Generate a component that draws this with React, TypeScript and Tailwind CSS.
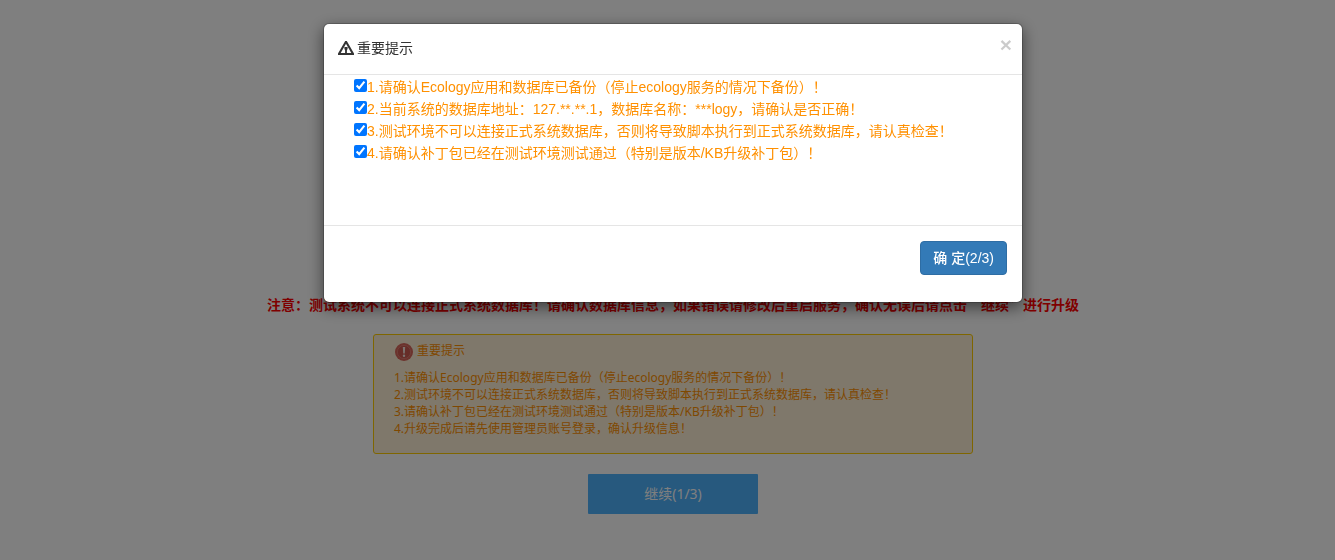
import { useState } from 'react';

const checks = [
  '1.请确认Ecology应用和数据库已备份（停止ecology服务的情况下备份）！',
  '2.当前系统的数据库地址：127.**.**.1，数据库名称：***logy，请确认是否正确！',
  '3.测试环境不可以连接正式系统数据库，否则将导致脚本执行到正式系统数据库，请认真检查！',
  '4.请确认补丁包已经在测试环境测试通过（特别是版本/KB升级补丁包）！',
];

const tips = [
  '1.请确认Ecology应用和数据库已备份（停止ecology服务的情况下备份）！',
  '2.测试环境不可以连接正式系统数据库，否则将导致脚本执行到正式系统数据库，请认真检查！',
  '3.请确认补丁包已经在测试环境测试通过（特别是版本/KB升级补丁包）！',
  '4.升级完成后请先使用管理员账号登录，确认升级信息！',
];

function WarningIcon() {
  return (
    <svg viewBox="0 0 16 14" className="h-3.5 w-4 shrink-0" aria-hidden="true">
      <path
        fillRule="evenodd"
        d="M7.2 0h1.6L16 12.6V14H0V12.6z M8 2.8L2.7 12h10.6z"
        fill="#333"
      />
      <path d="M6.4 6h3.2v1.8L8.9 9.4v2.8H7.1V9.4L6.4 7.8z" fill="#333" />
    </svg>
  );
}

function AlertIcon() {
  return (
    <svg viewBox="0 0 18 18" className="size-[18px] shrink-0" aria-hidden="true">
      <circle cx="9" cy="9" r="9" fill="#d8665a" />
      <circle cx="9" cy="9" r="6.6" fill="#cc5a50" stroke="#e08478" strokeWidth="0.8" />
      <path d="M7.8 4h2.4l-.4 6.4H8.2z" fill="#f8e8e0" />
      <circle cx="9" cy="12.8" r="1.2" fill="#f8e8e0" />
    </svg>
  );
}

function TipsPanel() {
  return (
    <section className="min-h-[120px] w-full max-w-[600px] rounded-[3px] border border-[#ffcc00] bg-[#fff0d6] px-5 py-2 text-xs text-[#ff9000]">
      <div className="flex items-start gap-1 pl-px">
        <AlertIcon />
        <h2 className="leading-4">重要提示</h2>
      </div>
      <ul className="mt-2 leading-[17px]">
        {tips.map((tip) => (
          <li key={tip}>{tip}</li>
        ))}
      </ul>
    </section>
  );
}

function ConfirmDialog({ onClose }: { onClose: () => void }) {
  return (
    <div className="fixed inset-0 flex items-start justify-center bg-black/50 pt-[23px] pl-[11px] font-['Liberation_Sans','Noto_Sans_CJK_SC',sans-serif]">
      <div
        role="dialog"
        aria-modal="true"
        aria-labelledby="dialog-title"
        className="w-full max-w-[700px] rounded-md border border-black/20 bg-white bg-clip-padding text-sm text-[#333] shadow-[0_5px_15px_rgba(0,0,0,0.5)]"
      >
        <header className="flex items-start justify-between border-b border-[#e5e5e5] px-3.5 pt-3.5 pb-4">
          <div className="flex items-center gap-[3px]">
            <WarningIcon />
            <h1 id="dialog-title" className="leading-5">
              重要提示
            </h1>
          </div>
          <button
            type="button"
            aria-label="关闭"
            onClick={onClose}
            className="-mr-1 text-[21px] leading-[14px] font-bold text-black opacity-20"
          >
            ×
          </button>
        </header>
        <ul className="min-h-[150px] px-[30px] pt-px leading-[22px] text-[#ff9000]">
          {checks.map((check) => (
            <li key={check}>
              <label className="flex items-start">
                <input type="checkbox" defaultChecked className="mt-[3px] size-[13px] shrink-0" />
                <span>{check}</span>
              </label>
            </li>
          ))}
        </ul>
        <footer className="flex justify-end border-t border-[#e5e5e5] px-[15px] pt-[15px] pb-[27px]">
          <button
            type="button"
            onClick={onClose}
            className="rounded border border-[#2e6da4] bg-[#337ab7] px-3 py-1.5 leading-5 font-medium text-white"
          >
            确 定(2/3)
          </button>
        </footer>
      </div>
    </div>
  );
}

export default function App() {
  const [open, setOpen] = useState(true);

  return (
    <div className="min-h-screen bg-white font-['Noto_Sans','Noto_Sans_CJK_SC',sans-serif]">
      <main className="flex flex-col items-center gap-5 pt-[294px] pl-[11px]">
        <p className="font-['Noto_Sans_CJK_SC',sans-serif] text-sm leading-5 font-bold text-[#ff0000]">
          注意：测试系统不可以连接正式系统数据库！请确认数据库信息，如果错误请修改后重启服务，确认无误后请点击“继续”进行升级
        </p>
        <TipsPanel />
        <button
          type="button"
          onClick={() => setOpen(true)}
          className="h-10 w-[170px] rounded-[1px] bg-[#4eb2fc] text-sm text-white"
        >
          继续(1/3)
        </button>
      </main>
      {open && <ConfirmDialog onClose={() => setOpen(false)} />}
    </div>
  );
}
